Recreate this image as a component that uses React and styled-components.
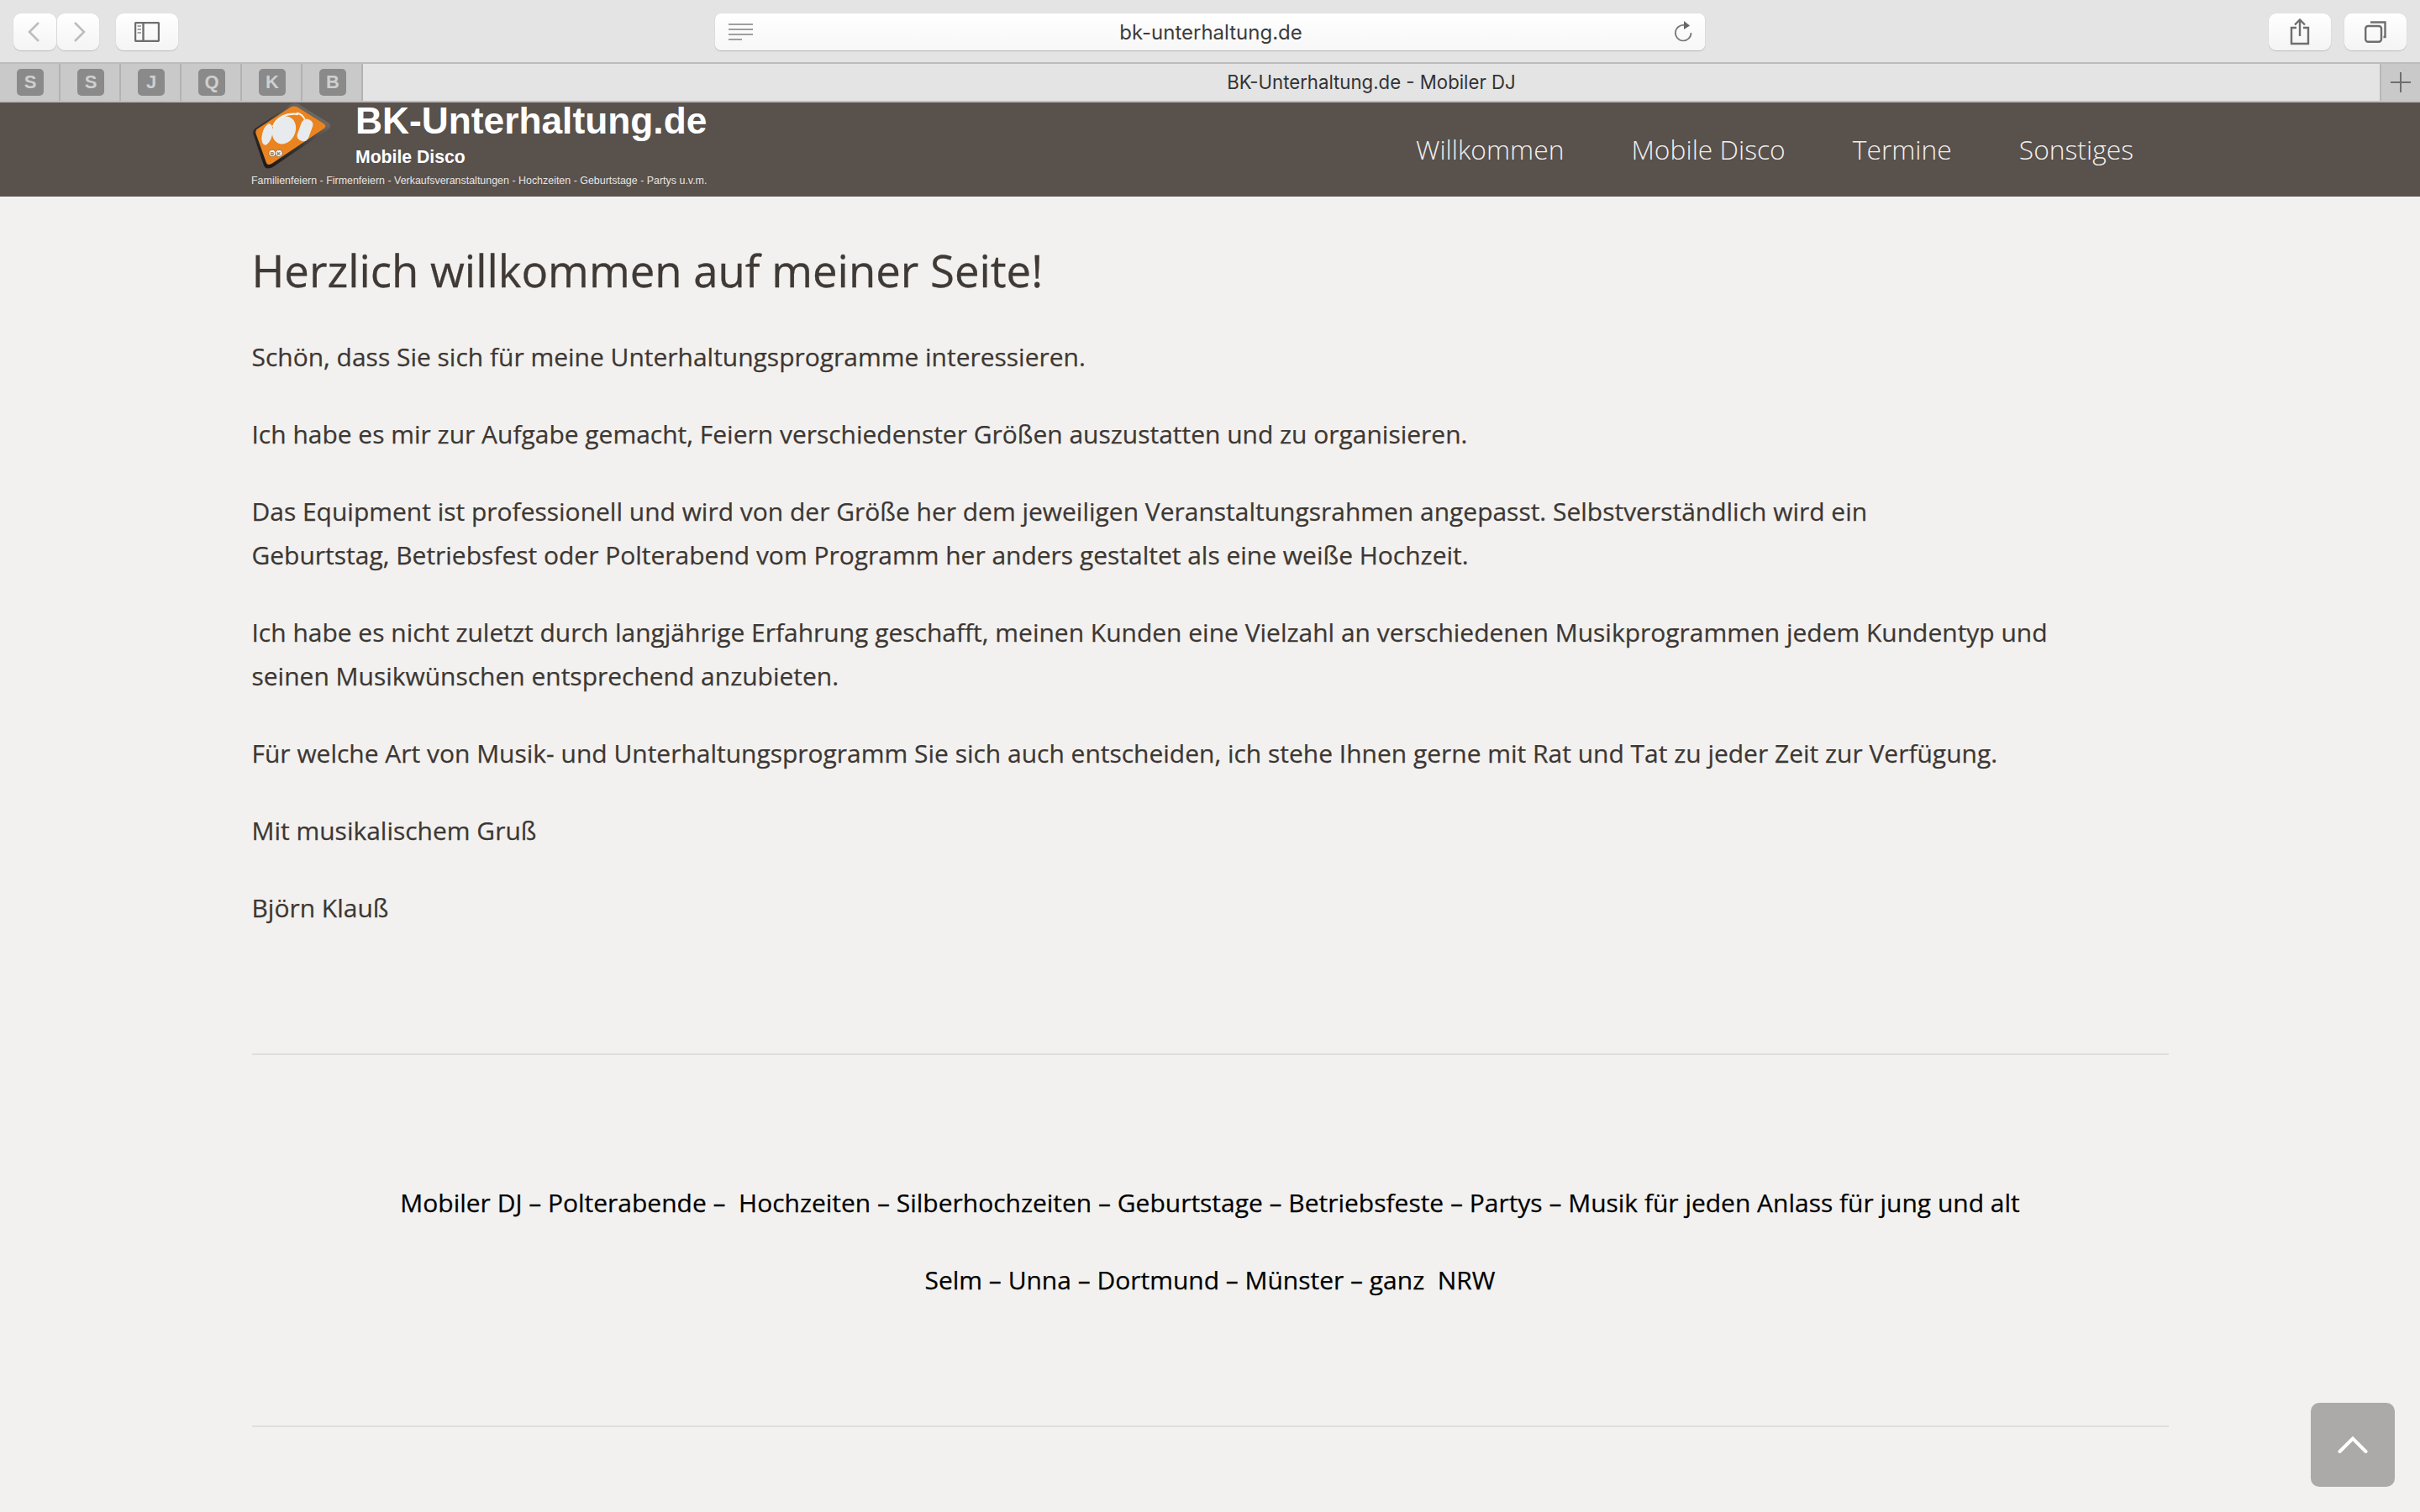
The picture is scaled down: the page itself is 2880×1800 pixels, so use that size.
import React from 'react';
import styled, { createGlobalStyle } from 'styled-components';

const Global = createGlobalStyle`
  html, body { margin: 0; padding: 0; background: #f2f1ef; }
  body { width: 2880px; height: 1800px; overflow: hidden; font-family: "Open Sans", sans-serif; }
`;

const Toolbar = styled.div`
  height: 76px;
  background: #e4e4e4;
  border-bottom: 2px solid #bcbcbc;
  display: flex;
  align-items: flex-start;
  padding: 16px 16px 0;
  box-sizing: border-box;
  position: relative;
`;

const ChromeButton = styled.div`
  width: ${({ w }) => w}px;
  height: 44px;
  margin-left: ${({ ml }) => ml || 0}px;
  box-sizing: border-box;
  border-radius: 9px;
  background: linear-gradient(#ffffff, #f4f4f4);
  box-shadow: 0 1px 1px #bdbdbd, 0 0 1px #c8c8c8;
  display: flex;
  align-items: center;
  justify-content: center;
`;

const Chevron = styled.svg`
  margin-left: ${({ shift }) => shift}px;
`;

const ToolbarSpacer = styled.div`
  flex: 1;
`;

const AddressBar = styled.div`
  position: absolute;
  left: 851px;
  top: 16px;
  width: 1178px;
  height: 44px;
  border-radius: 7px;
  background: linear-gradient(#ffffff, #f7f7f7);
  box-shadow: 0 1px 1px #b4b4b4, 0 0 1px #c4c4c4;
  display: grid;
  grid-template-columns: 1fr auto 1fr;
  align-items: center;
  padding: 0 14px 0 16px;
  box-sizing: border-box;
`;

const Reload = styled.svg`
  justify-self: end;
`;

const Url = styled.span`
  font-family: Inter, "Liberation Sans", sans-serif;
  font-size: 24px;
  color: #3c3c3c;
`;

const TabRow = styled.div`
  height: 46px;
  box-sizing: border-box;
  background: #e4e4e4;
  border-bottom: 2px solid #bcbcbc;
  display: flex;
`;

const PinnedTab = styled.div`
  width: 72px;
  box-sizing: border-box;
  padding-left: 2px;
  background: #c9c9c9;
  border-right: 2px solid #b2b2b2;
  display: flex;
  align-items: center;
  justify-content: center;
`;

const TabLetter = styled.span`
  width: 32px;
  height: 32px;
  border-radius: 5px;
  background: #8a8a8a;
  color: #cfcfcf;
  font-family: "Liberation Sans", sans-serif;
  font-weight: 700;
  font-size: 22px;
  display: flex;
  align-items: center;
  justify-content: center;
`;

const TabTitle = styled.div`
  flex: 1;
  text-align: center;
  line-height: 44px;
  font-family: Inter, "Liberation Sans", sans-serif;
  font-size: 22.2px;
  color: #333;
`;

const NewTab = styled.div`
  width: 48px;
  background: #c9c9c9;
  border-left: 2px solid #b8b8b8;
  box-sizing: border-box;
  display: flex;
  align-items: center;
  justify-content: center;
`;

const Header = styled.header`
  height: 112px;
  background: #59514c;
  padding: 0 299px;
  display: flex;
  justify-content: space-between;
`;

const Brand = styled.div`
  width: 545px;
  display: flex;
  flex-direction: column;
`;

const BrandTop = styled.div`
  display: flex;
  height: 84px;
`;

const Logo = styled.svg`
  flex: none;
`;

const BrandText = styled.div`
  margin-left: 24px;
  font-family: "Liberation Sans", Arial, sans-serif;
  color: #fff;
  font-weight: 700;
`;

const BrandName = styled.div`
  font-size: 44.3px;
  line-height: 44px;
  white-space: nowrap;
`;

const BrandSub = styled.div`
  font-size: 21.2px;
  line-height: 24px;
  margin-top: 9px;
`;

const Tagline = styled.div`
  font-family: "Liberation Sans", Arial, sans-serif;
  font-size: 12.45px;
  line-height: 18px;
  color: #e6e4e2;
  white-space: nowrap;
`;

const Nav = styled.nav`
  display: flex;
  align-items: center;
  padding: 0 42px 2px 0;
  gap: 80px;
`;

const NavLink = styled.a`
  font-weight: 300;
  font-size: 31.8px;
  color: #f1efed;
`;

const Main = styled.main`
  padding: 0 299.5px;
`;

const Title = styled.h1`
  margin: 0;
  padding-top: 50px;
  font-weight: 400;
  font-size: 52.7px;
  line-height: 76px;
  color: #403a36;
  -webkit-text-stroke: 0.3px #403a36;
`;

const Para = styled.p`
  margin: 0 0 39.3px;
  font-size: 29.98px;
  line-height: 52.5px;
  color: #3d3733;
  -webkit-text-stroke: 0.25px #3d3733;
  white-space: nowrap;
`;

const Intro = styled.div`
  padding-top: 39px;
`;

const Rule = styled.hr`
  border: 0;
  height: 2px;
  background: #dfdedc;
  margin: ${({ mt }) => mt}px 0 0;
`;

const Seo = styled.div`
  padding-top: 150px;
  text-align: center;
`;

const SeoLine = styled.p`
  margin: 0 0 39.3px;
  font-size: 29.98px;
  line-height: 52.5px;
  color: #000;
  -webkit-text-stroke: 0.25px #000;
  white-space: pre;
`;

const ScrollTop = styled.a`
  position: fixed;
  left: 2750px;
  top: 1670px;
  width: 100px;
  height: 100px;
  border-radius: 10px;
  background: #abaaa8;
  display: flex;
  align-items: center;
  justify-content: center;
`;

const iconStroke = { fill: 'none', stroke: '#6e6e6e', strokeWidth: 2.4 };
const logoLine = { fill: 'none', stroke: '#f6efe6' };

const App = () => (
  <>
    <Global />
    <Toolbar>
      <ChromeButton w={51}>
        <Chevron shift={-4} width="16" height="26" viewBox="0 0 16 26"><path d="M14 2 3 13l11 11" fill="none" stroke="#bdbdbd" strokeWidth="2.6" /></Chevron>
      </ChromeButton>
      <ChromeButton w={50} ml={1}>
        <Chevron shift={4} width="16" height="26" viewBox="0 0 16 26"><path d="M2 2l11 11L2 24" fill="none" stroke="#bdbdbd" strokeWidth="2.6" /></Chevron>
      </ChromeButton>
      <ChromeButton w={74} ml={20}>
        <svg width="30" height="24" viewBox="0 0 30 24">
          <rect x="1" y="1" width="28" height="22" rx="1.5" {...iconStroke} />
          <path d="M10.5 1v22" {...iconStroke} />
          <path d="M3.5 5H8M3.5 9H8M3.5 13H8" fill="none" stroke="#8c8c8c" strokeWidth="1.6" />
        </svg>
      </ChromeButton>
      <AddressBar>
        <svg width="30" height="22" viewBox="0 0 30 22">
          <path d="M0 2h29M0 8h29M0 14h29M0 20h16" fill="none" stroke="#808080" strokeWidth="1.7" />
        </svg>
        <Url>bk-unterhaltung.de</Url>
        <Reload width="24" height="28" viewBox="0 0 24 28">
          <path d="M14.5 6.2A9.3 9.3 0 1 0 21.5 15" fill="none" stroke="#777" strokeWidth="1.7" />
          <path d="M13 1l7 5.5-7 4.5z" fill="#666" />
        </Reload>
      </AddressBar>
      <ToolbarSpacer />
      <ChromeButton w={74}>
        <svg width="24" height="32" viewBox="0 0 24 32">
          <path d="M8 11H2v19h20V11h-6" {...iconStroke} />
          <path d="M12 21V2M6 7.5 12 1.500l6 6" {...iconStroke} />
        </svg>
      </ChromeButton>
      <ChromeButton w={74} ml={16}>
        <svg width="26" height="26" viewBox="0 0 26 26">
          <rect x="1.200" y="6" width="18.800" height="18.800" rx="3" {...iconStroke} />
          <path d="M7 1.500h17.500V19h-2" {...iconStroke} />
        </svg>
      </ChromeButton>
    </Toolbar>
    <TabRow>
      {['S', 'S', 'J', 'Q', 'K', 'B'].map((letter, i) => (
        <PinnedTab key={i}><TabLetter>{letter}</TabLetter></PinnedTab>
      ))}
      <TabTitle>BK-Unterhaltung.de - Mobiler DJ</TabTitle>
      <NewTab>
        <svg width="24" height="24" viewBox="0 0 24 24"><path d="M12 0v24M0 12h24" stroke="#6e6e6e" strokeWidth="2" /></svg>
      </NewTab>
    </TabRow>
    <Header>
      <Brand>
        <BrandTop>
          <Logo width="100" height="84" viewBox="0 0 100 84">
            <defs>
              <linearGradient id="logoEdge" x1="0.85" y1="0.1" x2="0.15" y2="0.9">
                <stop offset="0" stopColor="#76706b" />
                <stop offset="0.55" stopColor="#3a3633" />
                <stop offset="1" stopColor="#1e1b1a" />
              </linearGradient>
            </defs>
            <path d="M4.500 31 45 3.500c4-3 8-3 12-1l34 21c4 2.500 4 6 .5 8.500L27 76c-4 3-10 4-12-1L2.500 38c-1-3 0-5 2-7z" fill="url(#logoEdge)" />
            <path d="M6.500 32 46 6c3-2 6-2 9-.5l31 19.500c3 2 3 4 .5 6L25 72.500c-3 2-6 2-7-.5L5.500 37c-.5-2 0-3.500 1-5z" fill="#ea8420" />
            <ellipse cx="19" cy="38" rx="5.500" ry="12.500" transform="rotate(14 19 38)" fill="#e8ebee" stroke="#f6efe6" strokeWidth="0.8" />
            <ellipse cx="39" cy="33" rx="13.500" ry="17" transform="rotate(24 39 33)" fill="#e8ebee" />
            <rect x="57.500" y="20" width="13" height="26" rx="5.500" transform="rotate(20 64 33)" fill="#e8ebee" stroke="#f6efe6" strokeWidth="0.8" />
            <path d="M26 29C30 18 42 12 56 14" {...logoLine} strokeWidth="2.400" />
            <path d="M54 12.500C59 13.500 62 16 63.500 20" {...logoLine} strokeWidth="1.800" />
            <circle cx="25" cy="60.500" r="4.200" fill="#f6efe6" stroke="#6b4a2a" strokeWidth="0.6" />
            <circle cx="33" cy="60.500" r="4.200" fill="#f6efe6" stroke="#6b4a2a" strokeWidth="0.6" />
            <text x="25" y="62.700" fontSize="6" fontWeight="700" fontFamily="Liberation Sans" textAnchor="middle" fill="#7a5a3a">B</text>
            <text x="33" y="62.700" fontSize="6" fontWeight="700" fontFamily="Liberation Sans" textAnchor="middle" fill="#7a5a3a">K</text>
          </Logo>
          <BrandText>
            <BrandName>BK-Unterhaltung.de</BrandName>
            <BrandSub>Mobile Disco</BrandSub>
          </BrandText>
        </BrandTop>
        <Tagline>Familienfeiern - Firmenfeiern - Verkaufsveranstaltungen - Hochzeiten - Geburtstage - Partys u.v.m.</Tagline>
      </Brand>
      <Nav>
        <NavLink>Willkommen</NavLink>
        <NavLink>Mobile Disco</NavLink>
        <NavLink>Termine</NavLink>
        <NavLink>Sonstiges</NavLink>
      </Nav>
    </Header>
    <Main>
      <Title>Herzlich willkommen auf meiner Seite!</Title>
      <Intro>
        <Para>Schön, dass Sie sich für meine Unterhaltungsprogramme interessieren.</Para>
        <Para>Ich habe es mir zur Aufgabe gemacht, Feiern verschiedenster Größen auszustatten und zu organisieren.</Para>
        <Para>Das Equipment ist professionell und wird von der Größe her dem jeweiligen Veranstaltungsrahmen angepasst. Selbstverständlich wird ein<br />Geburtstag, Betriebsfest oder Polterabend vom Programm her anders gestaltet als eine weiße Hochzeit.</Para>
        <Para>Ich habe es nicht zuletzt durch langjährige Erfahrung geschafft, meinen Kunden eine Vielzahl an verschiedenen Musikprogrammen jedem Kundentyp und<br />seinen Musikwünschen entsprechend anzubieten.</Para>
        <Para>Für welche Art von Musik- und Unterhaltungsprogramm Sie sich auch entscheiden, ich stehe Ihnen gerne mit Rat und Tat zu jeder Zeit zur Verfügung.</Para>
        <Para>Mit musikalischem Gruß</Para>
        <Para>Björn Klauß</Para>
      </Intro>
      <Rule mt={147} />
      <Seo>
        <SeoLine>Mobiler DJ – Polterabende –  Hochzeiten – Silberhochzeiten – Geburtstage – Betriebsfeste – Partys – Musik für jeden Anlass für jung und alt</SeoLine>
        <SeoLine>Selm – Unna – Dortmund – Münster – ganz  NRW</SeoLine>
      </Seo>
      <Rule mt={146} />
    </Main>
    <ScrollTop>
      <svg width="36" height="22" viewBox="0 0 36 22"><path d="M2.500 19 18 3.500 33.500 19" fill="none" stroke="#fff" strokeWidth="4" strokeLinecap="round" /></svg>
    </ScrollTop>
  </>
);

export default App;
